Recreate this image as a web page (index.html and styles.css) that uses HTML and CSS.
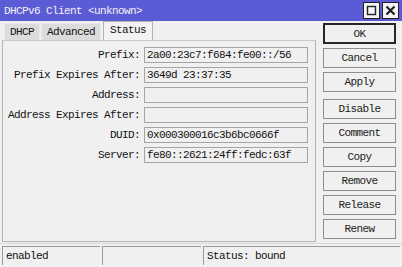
FILE: index.html
```html
<!DOCTYPE html>
<html lang="en">
<head>
    <meta charset="utf-8" />
    <title>DHCPv6 Client</title>
    <link rel="stylesheet" href="styles.css">
</head>
<body>
<div class="window">
    <div class="titlebar">
        <span class="title">DHCPv6 Client &lt;unknown&gt;</span>
        <span class="tb-btn">
            <svg width="11" height="11" viewBox="0 0 11 11"><rect x="1.5" y="1.5" width="8" height="8" fill="none" stroke="#222" stroke-width="1.4"/></svg>
        </span>
        <span class="tb-btn">
            <svg width="11" height="11" viewBox="0 0 11 11"><path d="M1.5 1.5 L9.5 9.5 M9.5 1.5 L1.5 9.5" stroke="#222" stroke-width="2.2"/></svg>
        </span>
    </div>
    <div class="main">
        <div class="left">
            <div class="tabs">
                <span class="tab">DHCP</span>
                <span class="tab">Advanced</span>
                <span class="tab active">Status</span>
            </div>
            <div class="panel">
                <div class="form">
                    <label>Prefix:</label><div class="field">2a00:23c7:f684:fe00::/56</div>
                    <label>Prefix Expires After:</label><div class="field">3649d 23:37:35</div>
                    <label>Address:</label><div class="field"></div>
                    <label>Address Expires After:</label><div class="field"></div>
                    <label>DUID:</label><div class="field">0x000300016c3b6bc0666f</div>
                    <label>Server:</label><div class="field">fe80::2621:24ff:fedc:63f</div>
                </div>
            </div>
        </div>
        <div class="buttons">
            <button class="default">OK</button>
            <button>Cancel</button>
            <button>Apply</button>
            <button class="sep">Disable</button>
            <button>Comment</button>
            <button>Copy</button>
            <button>Remove</button>
            <button>Release</button>
            <button>Renew</button>
        </div>
    </div>
    <div class="statusbar">
        <div class="cell c1">enabled</div>
        <div class="cell c2"></div>
        <div class="cell c3">Status: bound</div>
    </div>
</div>
</body>
</html>
```

FILE: styles.css
```css
html, body { margin: 0; padding: 0; }
body {
    background: #f0f0f0;
    font-family: "Liberation Mono", "DejaVu Sans Mono", monospace;
    font-size: 11px;
    letter-spacing: -0.6px;
    color: #111;
}
.window {
    width: 402px;
    height: 267px;
    background: #f0f0f0;
    overflow: hidden;
}
.titlebar {
    height: 21px;
    background: #5b5bd5;
    color: #f2f2f2;
    display: flex;
    align-items: center;
    padding: 0 3px 0 4px;
    gap: 2px;
}
.title { flex: 1; }
.tb-btn {
    width: 15px;
    height: 15px;
    background: #f4f4f4;
    border: 1px solid #222;
    display: flex;
    align-items: center;
    justify-content: center;
}
.main {
    display: flex;
    height: 222px;
}
.left {
    width: 314px;
    margin-left: 2px;
    display: flex;
    flex-direction: column;
}
.tabs {
    display: flex;
    align-items: flex-end;
    height: 19px;
    padding-left: 2px;
}
.tab {
    height: 16px;
    line-height: 16px;
    padding: 0 5px;
    background: #dcdcdc;
    border: 1px solid #e8e8e8;
    border-bottom: none;
    margin-right: 1px;
}
.tab.active {
    height: 18px;
    line-height: 17px;
    background: #f3f3f3;
    border: 1px solid #b4b4b4;
    border-bottom: none;
    padding: 0 6px;
    margin-left: 1px;
}
.panel {
    flex: 1;
    border: 1px solid #b4b4b4;
    border-top-color: #c8c8c8;
    padding: 6px 0 0 0;
    margin-bottom: 1px;
}
.form {
    display: grid;
    grid-template-columns: 137px 164px;
    column-gap: 4px;
    row-gap: 4px;
    align-items: center;
}
.form label {
    text-align: right;
}
.field {
    height: 14px;
    line-height: 14px;
    border: 1px solid #a5a5a5;
    background: #f0f0f0;
    padding: 0 2px;
}
.buttons {
    display: flex;
    flex-direction: column;
    margin-left: 7px;
    padding-top: 2px;
    gap: 4px;
}
.buttons button {
    width: 73px;
    height: 20px;
    font: inherit;
    letter-spacing: inherit;
    background: #f0f0f0;
    border: 1px solid #8e8e8e;
    padding: 0;
    color: #222;
}
.buttons button.default {
    border: 2px solid #262626;
    height: 21px;
}
.buttons button.sep { margin-top: 3px; }
.statusbar {
    display: flex;
    gap: 2px;
    padding: 2px 2px 0 2px;
    border-top: 1px solid #d8d8d8;
}
.cell {
    height: 18px;
    line-height: 18px;
    border-top: 1px solid #9a9a9a;
    border-left: 1px solid #9a9a9a;
    padding-left: 3px;
}
.c1 { width: 94px; }
.c2 { width: 95px; }
.c3 { flex: 1; }
```
